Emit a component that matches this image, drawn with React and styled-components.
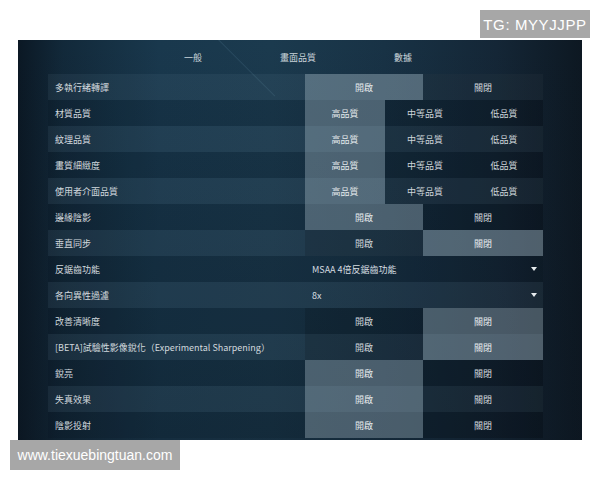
import styled, { createGlobalStyle } from "styled-components";

const GlobalStyle = createGlobalStyle`
  html, body {
    margin: 0;
    padding: 0;
    background: #ffffff;
  }
  body {
    font-family: "Noto Sans CJK TC", "Noto Sans", sans-serif;
  }
`;

const Page = styled.div`
  width: 600px;
  height: 480px;
  background: #ffffff;
  display: flex;
  flex-direction: column;
  overflow: hidden;
`;

const TopBar = styled.div`
  height: 40px;
  display: flex;
  justify-content: flex-end;
  align-items: flex-start;
  padding: 10px 10px 0 0;
  box-sizing: border-box;
`;

const Watermark = styled.div`
  background: #a7a7a7;
  color: #ffffff;
  font-family: "Liberation Sans", Arial, sans-serif;
  display: flex;
  align-items: center;
  justify-content: center;
  width: ${({ $w }) => $w}px;
  height: ${({ $h }) => $h}px;
  font-size: ${({ $size }) => $size}px;
  letter-spacing: ${({ $spacing }) => $spacing || 0}px;
`;

const Panel = styled.div`
  position: relative;
  width: 564px;
  height: 400px;
  margin-left: 18px;
  overflow: hidden;
  background:
    linear-gradient(180deg, rgba(10, 20, 30, 0) 0%, rgba(12, 20, 30, 0.3) 100%),
    linear-gradient(
      90deg,
      #0b1824 0%,
      #12293a 8%,
      #19384d 25%,
      #1b3a4e 45%,
      #183245 65%,
      #142636 85%,
      #0d1822 100%
    );
`;

const Streak = styled.div`
  position: absolute;
  left: 200px;
  top: 0;
  width: 1px;
  height: 80px;
  background: rgba(140, 190, 215, 0.12);
  transform: rotate(-45deg);
  transform-origin: top left;
  pointer-events: none;
`;

const Tabs = styled.div`
  height: 34px;
  display: flex;
  justify-content: center;
  align-items: center;
  padding-right: 4px;
`;

const Tab = styled.div`
  width: 105px;
  text-align: center;
  font-size: 9px;
  color: #c9d3d9;
`;

const Rows = styled.div`
  margin: 0 39px 0 30px;
  display: flex;
  flex-direction: column;
`;

const Row = styled.div`
  height: 26px;
  display: grid;
  grid-template-columns: 257px 1fr;
  background: ${({ $odd }) =>
    $odd ? "rgba(120, 150, 170, 0.1)" : "rgba(0, 8, 16, 0.1)"};
`;

const Label = styled.div`
  display: flex;
  align-items: center;
  padding-left: 7px;
  font-size: 9px;
  color: #d2d9de;
  white-space: nowrap;
`;

const Options = styled.div`
  display: grid;
  grid-template-columns: ${({ $count }) =>
    $count === 3 ? "80px 80px 1fr" : "118px 1fr"};
`;

const Option = styled.div`
  display: flex;
  align-items: center;
  justify-content: center;
  font-size: 9px;
  color: ${({ $active }) => ($active ? "#e4e9ec" : "#cfd6db")};
  background: ${({ $active }) =>
    $active ? "rgba(175, 195, 205, 0.36)" : "rgba(0, 0, 0, 0.12)"};
`;

const Select = styled.div`
  display: flex;
  align-items: center;
  justify-content: space-between;
  padding: 0 6px 0 7px;
  font-size: 9px;
  color: #d6dde1;
`;

const Caret = styled.span`
  width: 0;
  height: 0;
  border-left: 3px solid transparent;
  border-right: 3px solid transparent;
  border-top: 4px solid #e6ebee;
`;

const Footer = styled.div`
  padding-left: 10px;
`;

const settings = [
  { label: "多執行緒轉譯", options: ["開啟", "關閉"], active: 0 },
  { label: "材質品質", options: ["高品質", "中等品質", "低品質"], active: 0 },
  { label: "紋理品質", options: ["高品質", "中等品質", "低品質"], active: 0 },
  { label: "畫質細緻度", options: ["高品質", "中等品質", "低品質"], active: 0 },
  { label: "使用者介面品質", options: ["高品質", "中等品質", "低品質"], active: 0 },
  { label: "邊緣陰影", options: ["開啟", "關閉"], active: 0 },
  { label: "垂直同步", options: ["開啟", "關閉"], active: 1 },
  { label: "反鋸齒功能", select: "MSAA 4倍反鋸齒功能" },
  { label: "各向異性過濾", select: "8x" },
  { label: "改善清晰度", options: ["開啟", "關閉"], active: 1 },
  {
    label: "[BETA]試驗性影像銳化（Experimental Sharpening）",
    options: ["開啟", "關閉"],
    active: 1,
  },
  { label: "銳亮", options: ["開啟", "關閉"], active: 0 },
  { label: "失真效果", options: ["開啟", "關閉"], active: 0 },
  { label: "陰影投射", options: ["開啟", "關閉"], active: 0 },
];

export default function App() {
  return (
    <>
      <GlobalStyle />
      <Page>
        <TopBar>
          <Watermark $w={110} $h={28} $size={15} $spacing={0.6}>
            TG: MYYJJPP
          </Watermark>
        </TopBar>

        <Panel>
          <Streak />
          <Tabs>
            <Tab>一般</Tab>
            <Tab>畫面品質</Tab>
            <Tab>數據</Tab>
          </Tabs>

          <Rows>
            {settings.map((item, i) => (
              <Row key={item.label} $odd={i % 2 === 0}>
                <Label>{item.label}</Label>
                {item.select ? (
                  <Select>
                    {item.select}
                    <Caret />
                  </Select>
                ) : (
                  <Options $count={item.options.length}>
                    {item.options.map((opt, j) => (
                      <Option key={opt} $active={j === item.active}>
                        {opt}
                      </Option>
                    ))}
                  </Options>
                )}
              </Row>
            ))}
          </Rows>
        </Panel>

        <Footer>
          <Watermark $w={170} $h={30} $size={14}>
            www.tiexuebingtuan.com
          </Watermark>
        </Footer>
      </Page>
    </>
  );
}
